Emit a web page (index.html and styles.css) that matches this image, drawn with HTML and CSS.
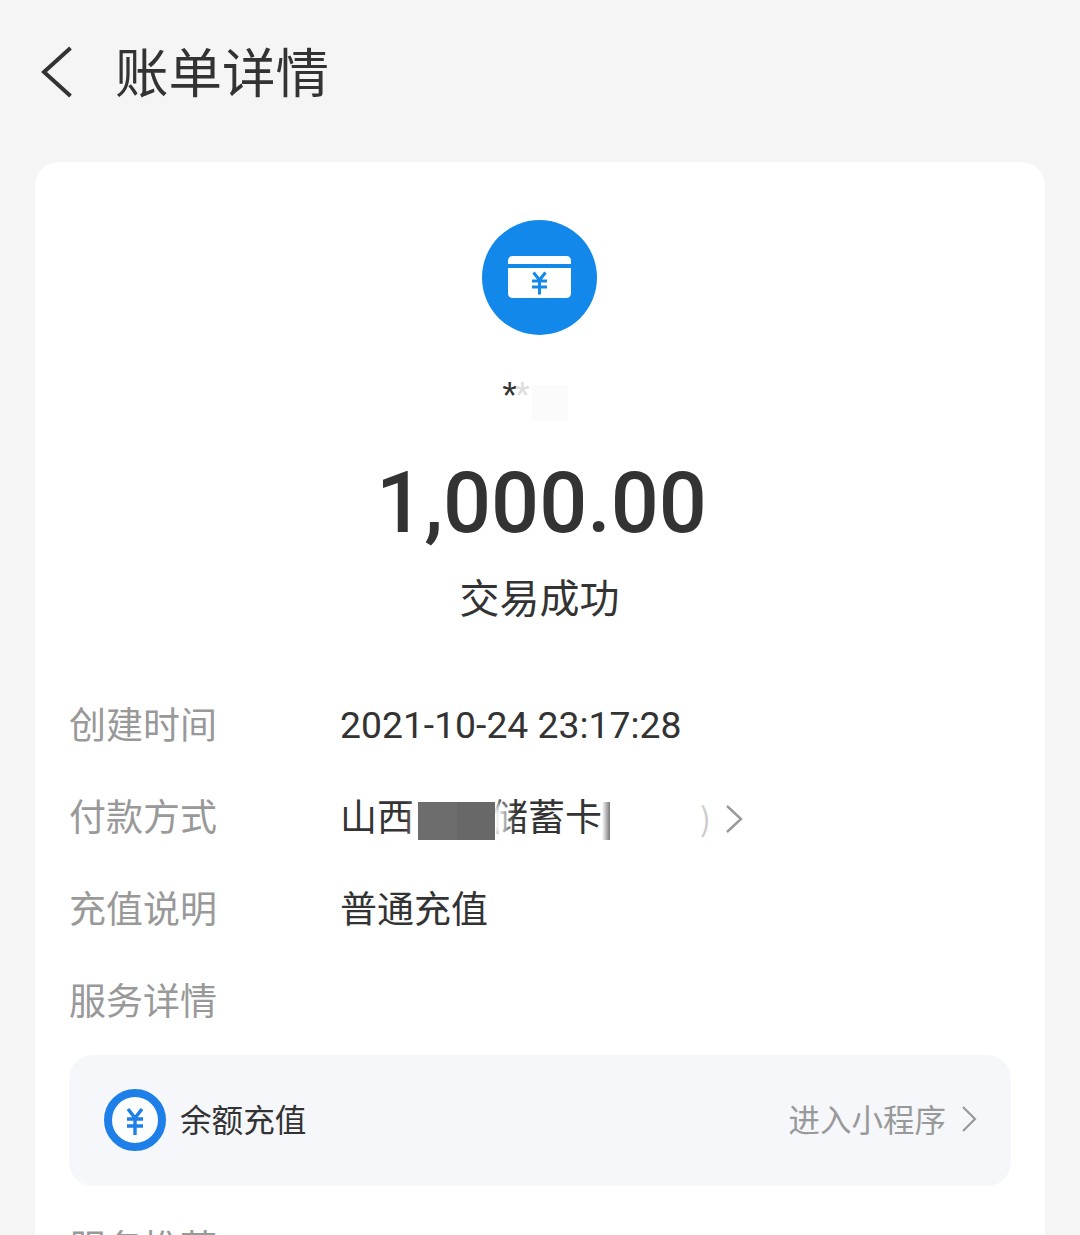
FILE: index.html
```html
<!DOCTYPE html>
<html lang="zh-CN">

<head>
    <meta charset="UTF-8">
    <meta name="viewport" content="width=device-width, initial-scale=1.0">
    <title>账单详情</title>
    <link rel="stylesheet" href="styles.css">
</head>

<body>
    <header class="top-bar">
        <svg class="back-icon" width="32" height="52" viewBox="0 0 32 52">
            <path d="M29.5 2 L3 26 L29.5 50" fill="none" stroke="#333" stroke-width="4"/>
        </svg>
        <h1 class="page-title">账单详情</h1>
    </header>

    <main class="card">
        <div class="summary">
            <svg class="type-icon" width="115" height="115" viewBox="0 0 115 115">
                <circle cx="57.5" cy="57.5" r="57.5" fill="#1289ea"/>
                <path d="M26 44 V41 Q26 36 31 36 H84 Q89 36 89 41 V44 Z" fill="#fff"/>
                <path d="M26 48 H89 V73 Q89 78 84 78 H31 Q26 78 26 73 Z" fill="#fff"/>
                <path d="M51.5 52.5 L57.5 60 L63.5 52.5 M50 61 H65 M50 67 H65 M57.5 60 V74.5" fill="none" stroke="#1289ea" stroke-width="3"/>
            </svg>
            <div class="payee">
                <span>*</span><span class="payee-faded">*</span><span class="payee-mask"></span>
            </div>
            <div class="amount">1,000.00</div>
            <div class="status">交易成功</div>
        </div>

        <div class="detail-row">
            <span class="detail-label">创建时间</span>
            <span class="detail-value detail-date">2021-10-24 23:17:28</span>
        </div>
        <div class="detail-row">
            <span class="detail-label">付款方式</span>
            <span class="detail-value pay-method">
                <span>山西</span><span class="blur-block"></span><span>储蓄卡</span><span class="blur-edge"></span><span class="blur-gap"></span><span class="blur-paren">)</span>
                <svg class="row-arrow" width="18" height="30" viewBox="0 0 18 30">
                    <path d="M2 2 L16 15 L2 28" fill="none" stroke="#999" stroke-width="2.4"/>
                </svg>
            </span>
        </div>
        <div class="detail-row">
            <span class="detail-label">充值说明</span>
            <span class="detail-value">普通充值</span>
        </div>
        <div class="detail-row">
            <span class="detail-label">服务详情</span>
        </div>

        <div class="service-box">
            <svg class="service-icon" width="62" height="62" viewBox="0 0 62 62">
                <circle cx="31" cy="31" r="27" fill="#fbfdff" stroke="#1f7fe8" stroke-width="8"/>
                <path d="M24 20 L31 29 L38 20 M23 30 H39 M23 37 H39 M31 29 V46" fill="none" stroke="#1f7fe8" stroke-width="3.4"/>
            </svg>
            <span class="service-name">余额充值</span>
            <span class="service-link">进入小程序</span>
            <svg class="service-arrow" width="16" height="28" viewBox="0 0 16 28">
                <path d="M2 2 L14 14 L2 26" fill="none" stroke="#999" stroke-width="2.2"/>
            </svg>
        </div>

        <div class="detail-row">
            <span class="detail-label">服务推荐</span>
        </div>
    </main>
</body>

</html>
```

FILE: styles.css
```css
html, body {
    height: 1235px;
    overflow: hidden;
}

body {
    margin: 0;
    background-color: #f5f5f5;
    color: #333;
    font-family: "Noto Sans CJK SC", "Noto Sans", sans-serif;
}

.top-bar {
    display: flex;
    align-items: center;
    height: 162px;
    padding: 0 0 18px 41px;
    box-sizing: border-box;
}

.back-icon {
    flex-shrink: 0;
    margin-right: 42px;
}

.page-title {
    margin: 0 0 4px;
    font-size: 53.5px;
    font-weight: 400;
    line-height: 64px;
    white-space: nowrap;
}

.card {
    margin: 0 35px;
    padding: 58px 34px 0;
    background-color: #fff;
    border-radius: 24px 24px 0 0;
    height: 1073px;
    box-sizing: border-box;
}

.summary {
    display: flex;
    flex-direction: column;
    align-items: center;
}

.type-icon {
    margin-right: 2px;
}

.payee {
    display: flex;
    align-items: flex-start;
    height: 40px;
    margin: 38px 0 0 -10px;
    font-family: "Liberation Sans", sans-serif;
    font-size: 38px;
    line-height: 46px;
    color: #333;
}

.payee-faded {
    color: #ddd;
    margin-left: -2px;
}

.payee-mask {
    width: 36px;
    height: 36px;
    background-color: #fbfbfb;
    margin: 12px 0 0 2px;
}

.amount {
    margin: 39px 0 0 3px;
    font-family: Roboto, sans-serif;
    font-size: 84.6px;
    font-weight: 500;
    line-height: 104px;
    color: #333;
}

.status {
    margin: 11px 0 0 -1px;
    font-size: 40px;
    line-height: 58px;
}

.detail-row {
    display: flex;
    align-items: center;
    height: 92px;
}

.summary + .detail-row {
    margin-top: 52px;
}

.detail-label {
    width: 271px;
    flex-shrink: 0;
    font-size: 37px;
    color: #999;
    white-space: nowrap;
}

.detail-value {
    font-size: 37px;
    color: #333;
}

.detail-date {
    font-family: Roboto, sans-serif;
    font-size: 37.3px;
    margin-top: 4px;
}

.pay-method {
    display: flex;
    align-items: center;
}

.blur-block {
    width: 77px;
    height: 38px;
    margin: 12px -4px 0 4px;
    background: linear-gradient(to right, #6d6d6d 50%, #686868 50%);
    position: relative;
    z-index: 1;
    box-shadow: 14px 0 10px -2px rgba(255, 255, 255, 0.95), -8px 0 7px -2px rgba(255, 255, 255, 0.85);
}

.blur-edge {
    width: 8px;
    height: 38px;
    margin-top: 12px;
    background: linear-gradient(to right, #fff, #777);
}

.blur-gap {
    width: 90px;
}

.blur-paren {
    color: #ccc;
    font-size: 32px;
    width: 25px;
    margin-top: 4px;
}

.row-arrow {
    flex-shrink: 0;
    margin-top: 8px;
}

.service-box {
    display: flex;
    align-items: center;
    height: 131px;
    margin-top: 10px;
    padding: 0 34px 0 35px;
    box-sizing: border-box;
    background-color: #f5f7fb;
    border-radius: 24px;
}

.service-icon {
    flex-shrink: 0;
    margin: 0 14px 2px 0;
}

.service-name {
    font-size: 31.6px;
    color: #333;
    white-space: nowrap;
    margin-bottom: 5px;
}

.service-link {
    margin: 0 0 5px auto;
    font-size: 31.5px;
    color: #999;
    white-space: nowrap;
}

.service-arrow {
    flex-shrink: 0;
    margin: 0 0 4px 15px;
}

.service-box + .detail-row {
    margin-top: 14px;
}
```
